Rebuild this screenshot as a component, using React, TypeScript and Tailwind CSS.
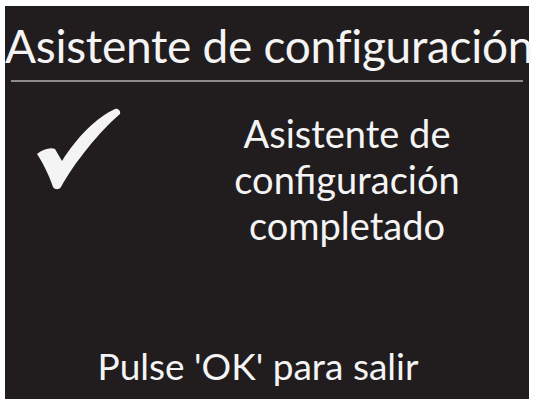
export default function App() {
  return (
    <div className="h-[404px] w-[534px] bg-white pl-[5px] pt-[6px]">
      <div className="flex h-[393px] w-[524px] flex-col bg-[#211d1e] text-[#f4f4f4] [font-family:Lato,sans-serif]">
        <h1 className="mt-[12px] whitespace-nowrap text-center text-[46px] leading-[56px] tracking-[-0.3px]">
          Asistente de configuración
        </h1>
        <div className="mx-[6px] mt-[6px] h-[2px] bg-[#8c8c8c]" />
        <div className="mt-[24px] flex">
          <div className="ml-[32px] w-[84px] pt-[1px]">
            <svg width="84" height="84" viewBox="0 0 84 84">
              <path
                d="M0 47 C6 42 14 40 18 42 L25 54 C40 30 60 10 78 2 C81 1 84 4 83 7 C62 25 38 55 24 80 C22 83 18 83 16 80 C12 68 6 56 0 47 Z"
                fill="#f4f4f4"
              />
            </svg>
          </div>
          <p className="ml-[108px] mt-[4px] w-[236px] text-center text-[38px] leading-[46px]">
            Asistente de configuración completado
          </p>
        </div>
        <p className="mt-auto mb-[10px] pr-[18px] text-center text-[37px] leading-[46px]">
          Pulse 'OK' para salir
        </p>
      </div>
    </div>
  );
}
